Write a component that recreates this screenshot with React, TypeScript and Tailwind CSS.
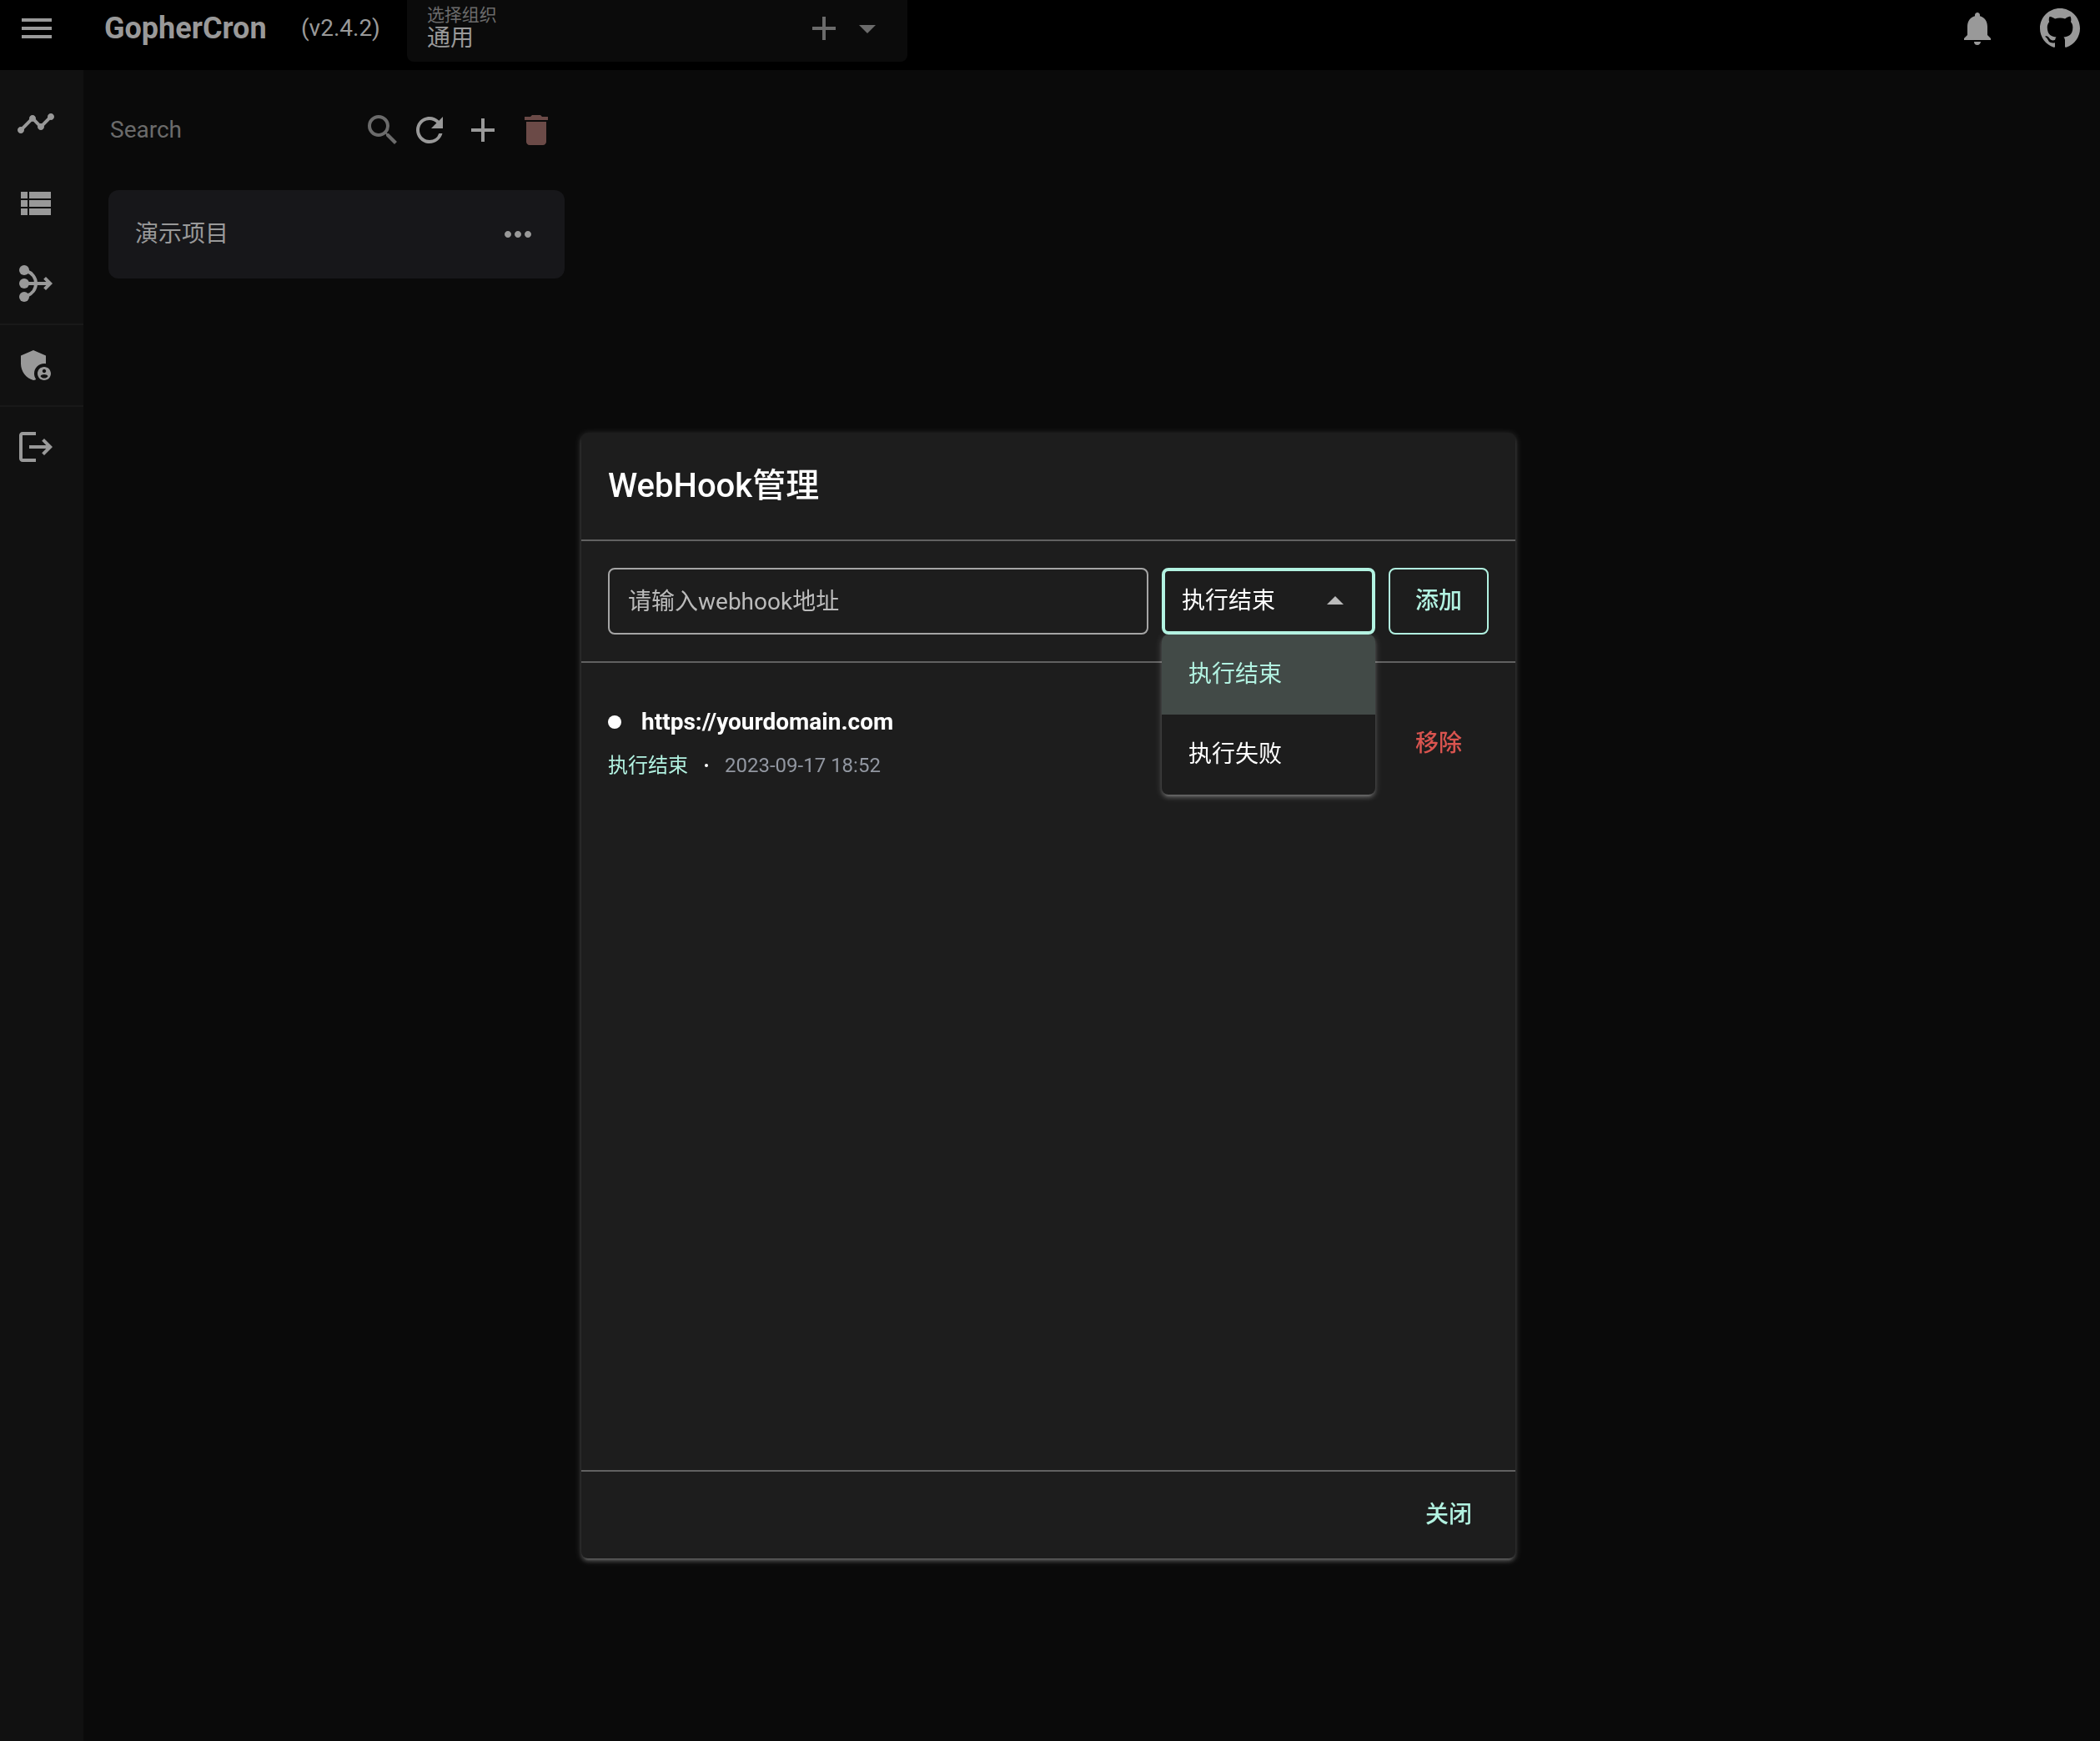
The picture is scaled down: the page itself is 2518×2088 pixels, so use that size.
import { useState } from 'react';
import type { ReactNode } from 'react';
import {
  MdAdd, MdAdminPanelSettings, MdArrowDropDown, MdArrowDropUp, MdDelete, MdLogout,
  MdMenu, MdMoreHoriz, MdNotifications, MdRefresh, MdSearch, MdTimeline,
} from 'react-icons/md';

const EVENTS = ['执行结束', '执行失败'];

const HOOKS = [
  { url: 'https://yourdomain.com', event: '执行结束', createdAt: '2023-09-17 18:52' },
];

export default function App() {
  return (
    <div className="min-h-screen flex flex-col bg-[#0a0a0a] text-[#999999] text-[28px] leading-10 font-['Roboto','Noto_Sans_CJK_SC',sans-serif]">
      <Header />
      <div className="flex grow">
        <Sidebar />
        <ProjectPanel />
      </div>
      <WebhookDialog />
    </div>
  );
}

function Header() {
  return (
    <header className="h-[84px] pb-4 pr-6 flex items-center bg-black">
      <button aria-label="menu" className="ml-5 mr-[57px]"><MdMenu size={48} /></button>
      <h1 className="w-[204px] text-4xl font-bold">GopherCron</h1>
      <span className="ml-8">(v2.4.2)</span>
      <div className="ml-8 w-[600px] h-[74px] pb-[6px] self-start px-6 flex items-center rounded-b-lg bg-[#0b0b0b]">
        <div className="grow flex flex-col">
          <label htmlFor="org" className="text-[21px] leading-6 text-[#6b6b6b]">选择组织</label>
          <select id="org" className="h-8 leading-8 appearance-none bg-transparent outline-none">
            <option>通用</option>
          </select>
        </div>
        <div className="flex items-center gap-1 text-[#6b6b6b]">
          <button aria-label="新建组织"><MdAdd size={48} /></button>
          <MdArrowDropDown size={48} />
        </div>
      </div>
      <div className="ml-auto flex items-center gap-[51px]">
        <button aria-label="通知"><MdNotifications size={48} /></button>
        <a href="#github" aria-label="GitHub"><GithubMark /></a>
      </div>
    </header>
  );
}

function Sidebar() {
  return (
    <nav className="w-[100px] shrink-0 pt-4 bg-[#111111]">
      <NavItem label="概览"><MdTimeline size={48} /></NavItem>
      <NavItem label="任务"><ViewListIcon /></NavItem>
      <NavItem label="工作流"><MergeIcon /></NavItem>
      <div className="h-0.5 bg-[#191919]" />
      <NavItem label="管理"><MdAdminPanelSettings size={48} /></NavItem>
      <div className="h-0.5 bg-[#191919]" />
      <NavItem label="退出"><MdLogout size={48} /></NavItem>
    </nav>
  );
}

function NavItem({ label, children }: { label: string; children: ReactNode }) {
  return (
    <a href="#nav" aria-label={label} className="h-24 pl-[19px] flex items-center">{children}</a>
  );
}

function ProjectPanel() {
  return (
    <section className="w-[607px] px-[30px]">
      <div className="h-36 flex items-center">
        <input aria-label="Search" placeholder="Search" className="grow min-w-0 pl-0.5 bg-transparent outline-none placeholder:text-[#6b6b6b]" />
        <MdSearch size={48} className="shrink-0 text-[#6b6b6b]" />
        <div className="ml-2 pr-[10px] flex items-center gap-4">
          <button aria-label="刷新"><MdRefresh size={48} /></button>
          <button aria-label="新建"><MdAdd size={48} /></button>
          <button aria-label="删除" className="text-[#6b4a47]"><MdDelete size={48} /></button>
        </div>
      </div>
      <div className="h-[106px] px-8 flex items-center justify-between rounded-xl bg-[#17171a]">
        <span>演示项目</span>
        <button aria-label="更多"><MdMoreHoriz size={48} /></button>
      </div>
    </section>
  );
}

function WebhookDialog() {
  const [address, setAddress] = useState('');
  const [event, setEvent] = useState(EVENTS[0]);

  return (
    <div className="fixed inset-0 pt-[519px] pr-1 flex justify-center items-start">
      <div
        role="dialog"
        aria-labelledby="dialog-title"
        className="w-[1120px] rounded-lg bg-[#1d1d1d] text-white shadow-[0_2px_10px_rgba(255,255,255,0.2),0_4px_4px_rgba(255,255,255,0.14),0_6px_2px_-4px_rgba(255,255,255,0.12)]"
      >
        <h2 id="dialog-title" className="p-8 text-[40px] leading-[64px] font-medium">WebHook管理</h2>

        <form className="p-8 flex gap-4 border-y-2 border-[#616161]">
          <input
            aria-label="webhook地址"
            placeholder="请输入webhook地址"
            value={address}
            onChange={e => setAddress(e.target.value)}
            className="grow min-w-0 h-20 px-[22px] rounded-lg border-2 border-[#a5a5a5] bg-transparent outline-none placeholder:text-[#bbbbbb]"
          />
          <div className="relative w-64">
            <select
              aria-label="事件"
              value={event}
              onChange={e => setEvent(e.target.value)}
              className="w-full h-20 px-5 appearance-none rounded-lg border-4 border-[#b2f2e1] bg-transparent outline-none"
            >
              {EVENTS.map(name => <option key={name}>{name}</option>)}
            </select>
            <MdArrowDropUp size={48} className="absolute right-6 top-4 text-[#bbbbbb] pointer-events-none" />
            <ul
              role="listbox"
              className="absolute left-0 top-20 w-full rounded-lg overflow-hidden bg-[#1d1d1d] shadow-[0_2px_10px_rgba(255,255,255,0.2),0_4px_4px_rgba(255,255,255,0.14),0_6px_2px_-4px_rgba(255,255,255,0.12)]"
            >
              {EVENTS.map(name => (
                <li
                  key={name}
                  role="option"
                  aria-selected={name === event}
                  onClick={() => setEvent(name)}
                  className={`h-24 px-8 flex items-center ${name === event ? 'bg-[#424a47] text-[#b2f2e1]' : ''}`}
                >
                  {name}
                </li>
              ))}
            </ul>
          </div>
          <button type="button" className="h-20 w-[120px] rounded-lg border-2 border-[#b2f2e1] text-[#b2f2e1] font-medium">添加</button>
        </form>

        <ul className="h-[968px] p-8">
          {HOOKS.map(hook => (
            <li key={hook.url} className="h-[130px] flex items-center justify-between">
              <div className="flex flex-col gap-3">
                <div className="flex items-center gap-6">
                  <span className="size-4 rounded-full bg-white" />
                  <span className="font-bold">{hook.url}</span>
                </div>
                <div className="flex items-center text-2xl leading-10">
                  <span className="text-[#b2f2e1]">{hook.event}</span>
                  <span className="w-11 flex justify-center"><span className="size-1 rounded-full bg-white" /></span>
                  <span className="text-[#9297a1]">{hook.createdAt}</span>
                </div>
              </div>
              <button className="px-8 font-medium text-[#d9544f]">移除</button>
            </li>
          ))}
        </ul>

        <div className="py-4 px-5 flex justify-end border-t-2 border-[#616161]">
          <button className="h-[72px] px-8 font-medium text-[#b2f2e1]">关闭</button>
        </div>
      </div>
    </div>
  );
}

const ViewListIcon = () => (
  <svg viewBox="0 0 24 24" width={48} height={48} fill="currentColor">
    <path d="M3 5h4v4H3zM8 5h13v4H8zM3 10h4v4H3zM8 10h13v4H8zM3 15h4v4H3zM8 15h13v4H8z" />
  </svg>
);

const MergeIcon = () => (
  <svg viewBox="0 0 24 24" width={48} height={48} fill="none" stroke="currentColor" strokeWidth={2}>
    <g fill="currentColor" stroke="none">
      <circle cx="5" cy="4" r="3" />
      <circle cx="5" cy="12" r="3" />
      <circle cx="5" cy="20" r="3" />
      <path d="M18 8l4 4-4 4-1.41-1.41L19.17 12l-2.58-2.59z" />
    </g>
    <path d="M5 12h15.5M6.5 4.5c3.3 1.2 5.5 4.1 5.5 7.5s-2.2 6.3-5.5 7.5" />
  </svg>
);

const GithubMark = () => (
  <svg viewBox="0 0 16 16" width={48} height={48} fill="currentColor">
    <path d="M8 0C3.58 0 0 3.58 0 8c0 3.54 2.29 6.53 5.47 7.59.4.07.55-.17.55-.38 0-.19-.01-.82-.01-1.49-2.01.37-2.53-.49-2.69-.94-.09-.23-.48-.94-.82-1.13-.28-.15-.68-.52-.01-.53.63-.01 1.08.58 1.23.82.72 1.21 1.87.87 2.33.66.07-.52.28-.87.51-1.07-1.78-.2-3.64-.89-3.64-3.95 0-.87.31-1.59.82-2.15-.08-.2-.36-1.02.08-2.12 0 0 .67-.21 2.2.82.64-.18 1.32-.27 2-.27s1.36.09 2 .27c1.53-1.04 2.2-.82 2.2-.82.44 1.1.16 1.92.08 2.12.51.56.82 1.27.82 2.15 0 3.07-1.87 3.75-3.65 3.95.29.25.54.73.54 1.48 0 1.07-.01 1.93-.01 2.2 0 .21.15.46.55.38A8.01 8.01 0 0 0 16 8c0-4.42-3.58-8-8-8z" />
  </svg>
);
